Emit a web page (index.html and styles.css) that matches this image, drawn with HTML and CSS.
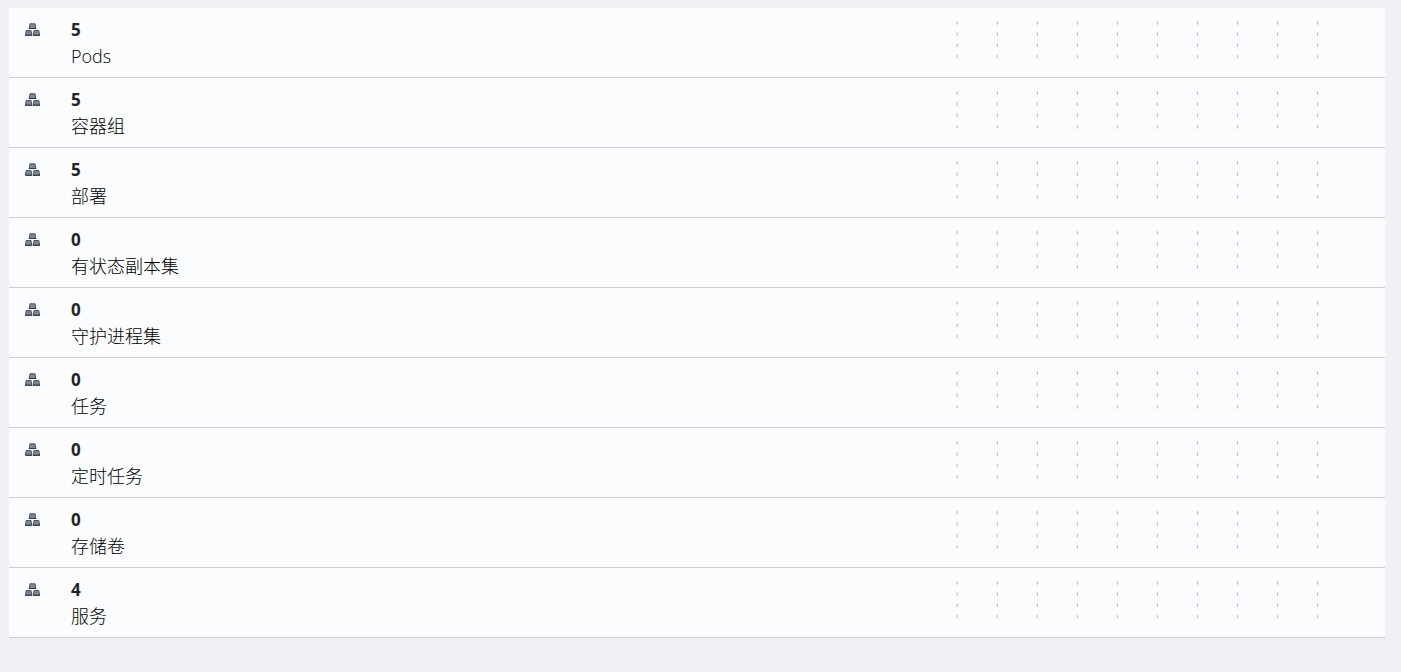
FILE: index.html
```
<!DOCTYPE html>
<html lang="zh-CN">
<head>
    <meta charset="UTF-8">
    <meta name="viewport" content="width=device-width, initial-scale=1.0">
    <title>Workloads</title>
    <link rel="stylesheet" href="styles.css">
</head>
<body>
    <!-- shared shapes for every row -->
    <svg class="defs" width="0" height="0" aria-hidden="true">
        <symbol id="icon-blocks" viewBox="0 0 15 13">
            <g fill="#808791" stroke="#4b5366" stroke-width="1">
                <path d="M5 .8h5l.8 4.7H4.2z"/>
                <path d="M1.2 7.5h4.8l.8 4.7H.5z"/>
                <path d="M9 7.5h4.8l.8 4.7H8.2z"/>
            </g>
            <path d="M3.8 5.5h7.4M0 12.3h7.1M7.9 12.3H15" fill="none" stroke="#30384d" stroke-width="1"/>
        </symbol>
        <symbol id="grid-lines" viewBox="0 0 364 40">
            <path d="M1.2 0v40M41.3 0v40M81.3 0v40M121.4 0v40M161.4 0v40M201.4 0v40M241.5 0v40M281.5 0v40M321.6 0v40M361.6 0v40" fill="none" stroke="#c4c5c8" stroke-width="1.2" stroke-dasharray="3.7 7.6"/>
        </symbol>
    </svg>

    <ul class="stat-list">
        <li class="stat-row">
            <svg class="stat-icon" aria-hidden="true"><use href="#icon-blocks"/></svg>
            <div class="stat-text">
                <strong class="stat-count">5</strong>
                <span class="stat-name">Pods</span>
            </div>
            <svg class="stat-chart" aria-hidden="true"><use href="#grid-lines"/></svg>
        </li>
        <li class="stat-row">
            <svg class="stat-icon" aria-hidden="true"><use href="#icon-blocks"/></svg>
            <div class="stat-text">
                <strong class="stat-count">5</strong>
                <span class="stat-name">容器组</span>
            </div>
            <svg class="stat-chart" aria-hidden="true"><use href="#grid-lines"/></svg>
        </li>
        <li class="stat-row">
            <svg class="stat-icon" aria-hidden="true"><use href="#icon-blocks"/></svg>
            <div class="stat-text">
                <strong class="stat-count">5</strong>
                <span class="stat-name">部署</span>
            </div>
            <svg class="stat-chart" aria-hidden="true"><use href="#grid-lines"/></svg>
        </li>
        <li class="stat-row">
            <svg class="stat-icon" aria-hidden="true"><use href="#icon-blocks"/></svg>
            <div class="stat-text">
                <strong class="stat-count">0</strong>
                <span class="stat-name">有状态副本集</span>
            </div>
            <svg class="stat-chart" aria-hidden="true"><use href="#grid-lines"/></svg>
        </li>
        <li class="stat-row">
            <svg class="stat-icon" aria-hidden="true"><use href="#icon-blocks"/></svg>
            <div class="stat-text">
                <strong class="stat-count">0</strong>
                <span class="stat-name">守护进程集</span>
            </div>
            <svg class="stat-chart" aria-hidden="true"><use href="#grid-lines"/></svg>
        </li>
        <li class="stat-row">
            <svg class="stat-icon" aria-hidden="true"><use href="#icon-blocks"/></svg>
            <div class="stat-text">
                <strong class="stat-count">0</strong>
                <span class="stat-name">任务</span>
            </div>
            <svg class="stat-chart" aria-hidden="true"><use href="#grid-lines"/></svg>
        </li>
        <li class="stat-row">
            <svg class="stat-icon" aria-hidden="true"><use href="#icon-blocks"/></svg>
            <div class="stat-text">
                <strong class="stat-count">0</strong>
                <span class="stat-name">定时任务</span>
            </div>
            <svg class="stat-chart" aria-hidden="true"><use href="#grid-lines"/></svg>
        </li>
        <li class="stat-row">
            <svg class="stat-icon" aria-hidden="true"><use href="#icon-blocks"/></svg>
            <div class="stat-text">
                <strong class="stat-count">0</strong>
                <span class="stat-name">存储卷</span>
            </div>
            <svg class="stat-chart" aria-hidden="true"><use href="#grid-lines"/></svg>
        </li>
        <li class="stat-row">
            <svg class="stat-icon" aria-hidden="true"><use href="#icon-blocks"/></svg>
            <div class="stat-text">
                <strong class="stat-count">4</strong>
                <span class="stat-name">服务</span>
            </div>
            <svg class="stat-chart" aria-hidden="true"><use href="#grid-lines"/></svg>
        </li>
    </ul>
</body>
</html>
```
FILE: styles.css
```
body {
    margin: 0;
    padding: 8px 16px 8px 9px;
    background-color: #f0f1f5;
    color: #212529;
    font-family: "Open Sans", "Noto Sans CJK SC", sans-serif;
    font-size: 18px;
}
.defs {
    position: absolute;
}
.stat-list {
    margin: 0;
    padding: 0;
    list-style: none;
}
.stat-row {
    display: flex;
    align-items: flex-start;
    padding: 8px 65px 7px 16px;
    background-color: #fafcfe;
    border-bottom: 1px solid #cbced6;
}
.stat-icon {
    flex: none;
    width: 15px;
    height: 13px;
    margin-top: 7px;
    margin-right: 31px;
}
.stat-text {
    flex: 1;
    line-height: 27px;
}
.stat-count,
.stat-name {
    display: block;
    height: 27px;
}
.stat-count {
    font-size: 17px;
    font-weight: 700;
}
.stat-name {
    color: #000;
    font-weight: 300;
}
.stat-chart {
    flex: none;
    width: 364px;
    height: 40px;
    margin-top: 5px;
}
```
